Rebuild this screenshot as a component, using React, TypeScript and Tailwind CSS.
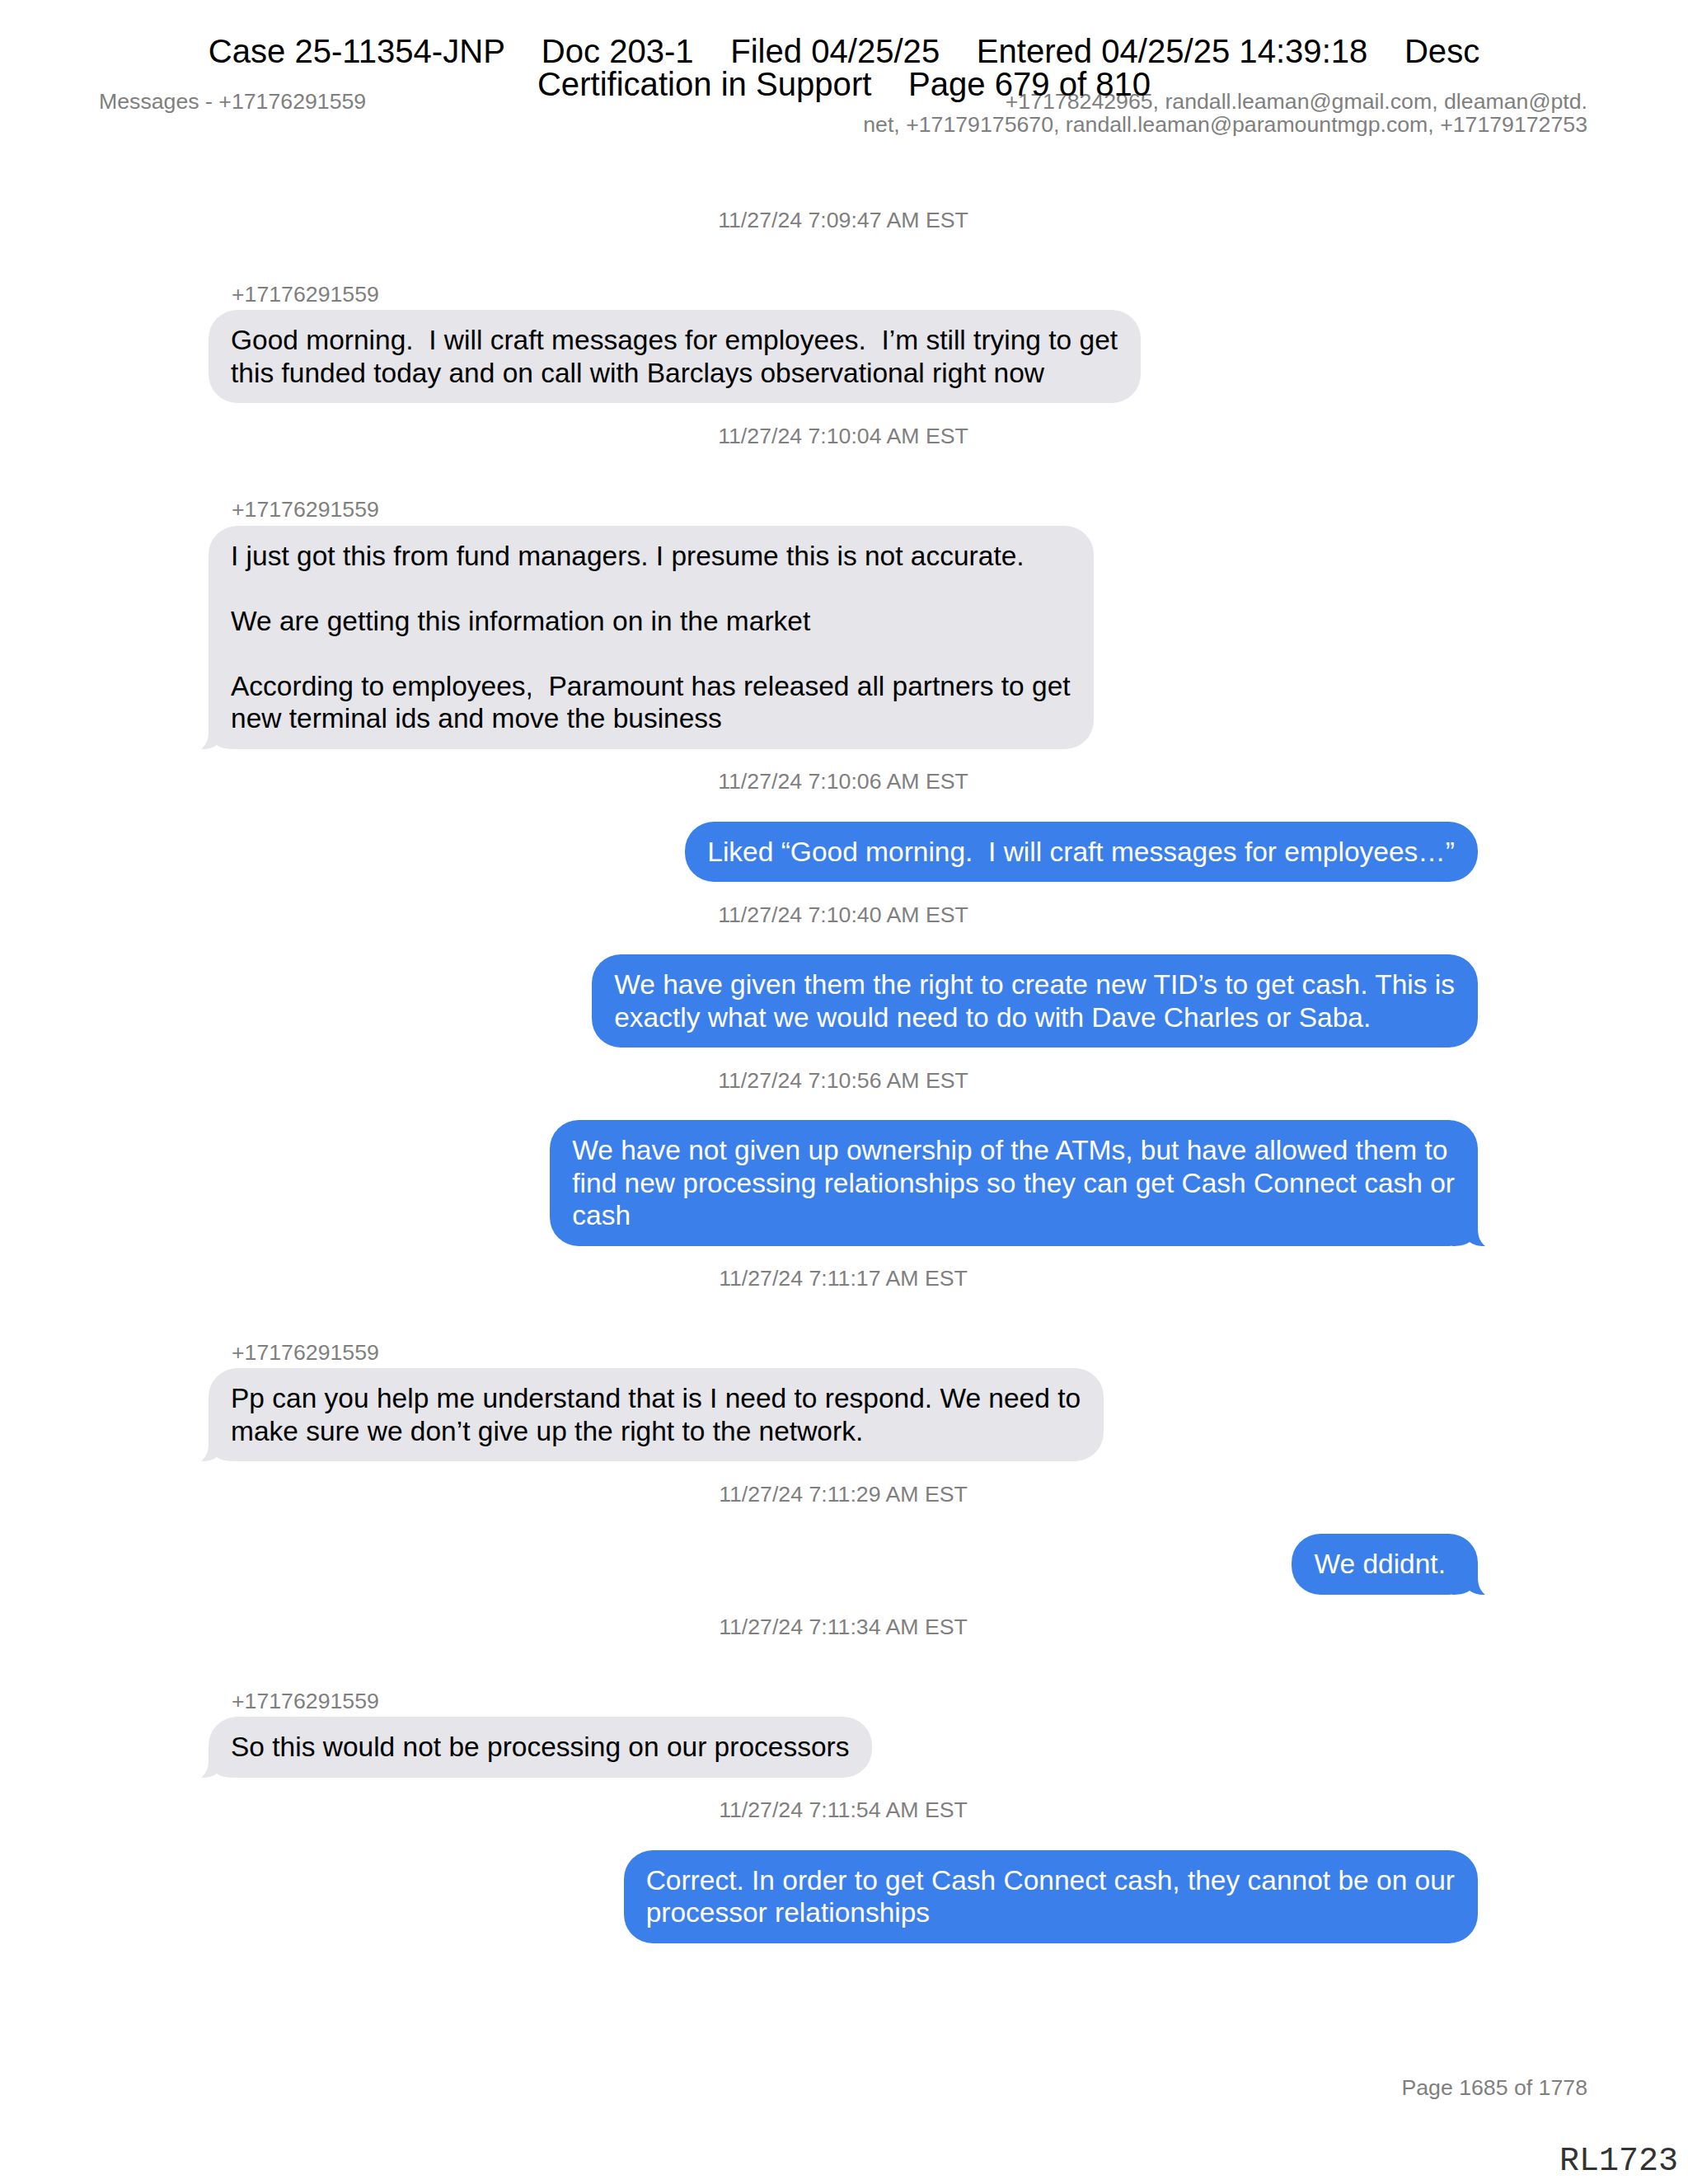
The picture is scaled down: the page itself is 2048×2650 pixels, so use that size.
import { Fragment } from 'react';

type Message = {
  time: string;
  from?: string;
  text: string;
  mine?: boolean;
  tail?: boolean;
  extra?: string;
};

const SENDER = '+17176291559';

const messages: Message[] = [
  {
    time: '11/27/24 7:09:47 AM EST',
    from: SENDER,
    text: 'Good morning.  I will craft messages for employees.  I’m still trying to get\nthis funded today and on call with Barclays observational right now',
  },
  {
    time: '11/27/24 7:10:04 AM EST',
    from: SENDER,
    text: 'I just got this from fund managers. I presume this is not accurate.\n\nWe are getting this information on in the market\n\nAccording to employees,  Paramount has released all partners to get\nnew terminal ids and move the business',
    tail: true,
  },
  {
    time: '11/27/24 7:10:06 AM EST',
    text: 'Liked “Good morning.  I will craft messages for employees…”',
    mine: true,
  },
  {
    time: '11/27/24 7:10:40 AM EST',
    text: 'We have given them the right to create new TID’s to get cash. This is\nexactly what we would need to do with Dave Charles or Saba.',
    mine: true,
  },
  {
    time: '11/27/24 7:10:56 AM EST',
    text: 'We have not given up ownership of the ATMs, but have allowed them to\nfind new processing relationships so they can get Cash Connect cash or\ncash',
    mine: true,
    tail: true,
  },
  {
    time: '11/27/24 7:11:17 AM EST',
    from: SENDER,
    text: 'Pp can you help me understand that is I need to respond. We need to\nmake sure we don’t give up the right to the network.',
    tail: true,
  },
  {
    time: '11/27/24 7:11:29 AM EST',
    text: 'We ddidnt.',
    mine: true,
    tail: true,
    extra: 'pr-[39px]',
  },
  {
    time: '11/27/24 7:11:34 AM EST',
    from: SENDER,
    text: 'So this would not be processing on our processors',
    tail: true,
  },
  {
    time: '11/27/24 7:11:54 AM EST',
    text: 'Correct. In order to get Cash Connect cash, they cannot be on our\nprocessor relationships',
    mine: true,
  },
];

function Tail({ mine }: { mine?: boolean }) {
  // little iMessage hook at the bottom corner
  if (mine) {
    return (
      <svg
        className="absolute right-[-9px] bottom-0 w-[40px] h-[40px]"
        viewBox="0 0 40 40"
        fill="#3b80ea"
      >
        <path d="M31 0 V18 C31 30 35 36 40 40 C33 40.5 26 38.5 21 35 C16 38.5 10 40 0 40 V0 Z" />
      </svg>
    );
  }
  return (
    <svg
      className="absolute left-[-9px] bottom-0 w-[40px] h-[40px]"
      viewBox="0 0 40 40"
      fill="#e5e5ea"
    >
      <path d="M9 0 V18 C9 30 5 36 0 40 C7 40.5 14 38.5 19 35 C24 38.5 30 40 40 40 V0 Z" />
    </svg>
  );
}

function Bubble({ m, top }: { m: Message; top: string }) {
  const color = m.mine ? 'bg-[#3b80ea] text-white self-end' : 'bg-[#e5e5ea] text-black self-start';
  return (
    <div
      className={`relative w-fit rounded-[35px] pl-[27px] pr-[28px] py-[17px] text-[33.5px] leading-[39.5px] whitespace-pre-wrap ${color} ${top} ${m.extra ?? ''}`}
    >
      {m.tail && <Tail mine={m.mine} />}
      <span className="relative">{m.text}</span>
    </div>
  );
}

export default function App() {
  return (
    <div className="relative w-[2048px] h-[2650px] bg-white font-['Liberation_Sans',Arial,sans-serif] overflow-hidden">
      {/* court filing stamp, printed over the export header */}
      <div className="absolute top-[42px] left-0 right-0 text-center text-[40.1px] leading-[40px] text-black whitespace-pre">
        <div>{'Case 25-11354-JNP    Doc 203-1    Filed 04/25/25    Entered 04/25/25 14:39:18    Desc'}</div>
        <div>{'Certification in Support    Page 679 of 810'}</div>
      </div>

      <div className="flex justify-between pl-[120px] pr-[122px] pt-[109px] text-[26.7px] leading-[28px] text-[#7f7f7f]">
        <div>Messages - +17176291559</div>
        <div className="text-right">
          <div>+17178242965, randall.leaman@gmail.com, dleaman@ptd.</div>
          <div>net, +17179175670, randall.leaman@paramountmgp.com, +17179172753</div>
        </div>
      </div>

      <div className="ml-[253px] w-[1540px] mt-[87px] flex flex-col">
        {messages.map((m, i) => (
          <Fragment key={i}>
            <div
              className={`text-center text-[26.7px] leading-[30px] text-[#7f7f7f] ${i === 0 ? '' : 'mt-[24.5px]'}`}
            >
              {m.time}
            </div>
            {m.from && (
              <div className="mt-[59.5px] pl-[28px] text-[26.7px] leading-[30px] text-[#7f7f7f]">
                {m.from}
              </div>
            )}
            <Bubble m={m} top={m.from ? 'mt-[4.5px]' : 'mt-[33.5px]'} />
          </Fragment>
        ))}
      </div>

      <div className="absolute left-0 right-0 top-[2518px] flex flex-col items-end">
        <div className="pr-[122px] text-[26.7px] leading-[30px] text-[#7f7f7f]">Page 1685 of 1778</div>
        <div className="mt-[55px] pr-[12px] font-['Liberation_Mono',monospace] text-[40px] leading-[40px] text-[#333]">
          RL1723
        </div>
      </div>
    </div>
  );
}
